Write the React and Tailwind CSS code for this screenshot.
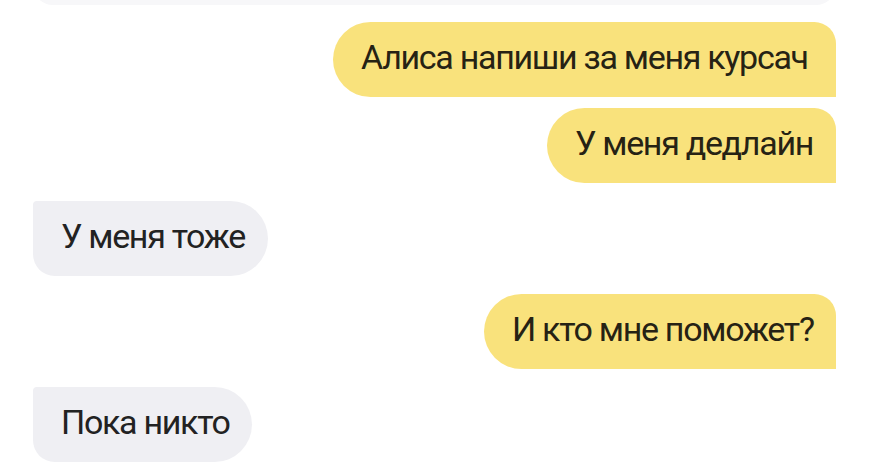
import React from 'react';

const messages = [
  { from: 'me', text: 'Алиса напиши за меня курсач', w: 'w-[503px]' },
  { from: 'me', text: 'У меня дедлайн', w: 'w-[289px]', tight: true },
  { from: 'bot', text: 'У меня тоже', w: 'w-[235px]' },
  { from: 'me', text: 'И кто мне поможет?', w: 'w-[352px]' },
  { from: 'bot', text: 'Пока никто', w: 'w-[219px]' },
];

function Bubble({ from, text, w }) {
  if (from === 'me') {
    return (
      <div className="flex justify-end">
        <div className={`${w} h-[75px] flex items-center pl-7 pb-[5px] whitespace-nowrap bg-[#f9e27c] text-[#262214] rounded-l-[38px] rounded-tr-[22px] rounded-br-none`}>
          {text}
        </div>
      </div>
    );
  }
  return (
    <div className="flex justify-start">
      <div className={`${w} h-[75px] flex items-center pl-7 pb-[5px] whitespace-nowrap bg-[#efeff3] text-[#222] rounded-r-[38px] rounded-bl-[22px] rounded-tl-[4px]`}>
        {text}
      </div>
    </div>
  );
}

export default function App() {
  return (
    <div className="w-[869px] h-[476px] overflow-hidden bg-white pl-[33px] pr-[33px] text-[34px] tracking-[-1.3px] leading-none font-['Roboto',sans-serif]">
      <div className="h-[40px] -mt-[35px] bg-[#f7f7f9] rounded-b-[20px]" />
      <div className="mt-[17px] flex flex-col">
        {messages.map((m, i) => (
          <div key={i} className={i === 0 ? '' : m.tight ? 'mt-[11px]' : 'mt-[18px]'}>
            <Bubble {...m} />
          </div>
        ))}
      </div>
    </div>
  );
}
